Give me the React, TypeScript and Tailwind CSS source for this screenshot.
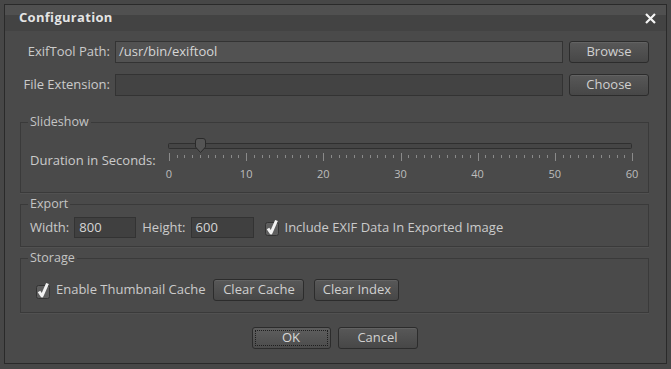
import React from "react";

const Btn = ({ children, className = "" }: { children: React.ReactNode; className?: string }) => (
  <button
    className={`h-[22px] rounded-[3px] border border-[#2c2c2c] bg-linear-to-b from-[#585858] to-[#474747] text-[13px] text-[#d0d0d0] shadow-[inset_0_1px_0_rgba(255,255,255,0.07)] ${className}`}
  >
    {children}
  </button>
);

const Check = () => (
  <svg width="15" height="17" viewBox="0 0 15 17" className="shrink-0">
    <rect x="0.5" y="3.5" width="13" height="13" rx="2" fill="#5e5e5e" stroke="#333" />
    <path d="M3 9.5 L6 14 L11.5 1.5" fill="none" stroke="#f2f2f2" strokeWidth="3" strokeLinejoin="round" />
  </svg>
);

const Group = ({ title, className = "", children }: { title: string; className?: string; children: React.ReactNode }) => (
  <fieldset className={`border border-[#3a3a3a] shadow-[0_1px_0_rgba(255,255,255,0.04)] ${className}`}>
    <legend className="ml-[7px] px-[2px] text-[12.5px] leading-[14px] text-[#c4c4c4]">{title}</legend>
    {children}
  </fieldset>
);

const Slider = () => {
  const ticks = Array.from({ length: 61 }, (_, i) => i);
  const x0 = 10;
  const step = 463 / 60;
  return (
    <div className="w-[483px]">
      <svg width="483" height="26" viewBox="0 0 483 26" className="block">
        <rect x={x0 - 0.5} y="5.5" width="463" height="5" rx="1" fill="#454545" stroke="#2f2f2f" />
        {ticks.map((i) => (
          <line
            key={i}
            x1={Math.round(x0 + i * step) + 0.5}
            x2={Math.round(x0 + i * step) + 0.5}
            y1={i % 10 === 0 ? 15 : 17}
            y2={i % 10 === 0 ? 23 : 20}
            stroke="#8a8a8a"
            strokeWidth="1"
          />
        ))}
        <path
          d="M36.5 3 Q36.5 0.5 39 0.5 L44 0.5 Q46.5 0.5 46.5 3 L46.5 9 L41.5 14.5 L36.5 9 Z"
          fill="#545454"
          stroke="#2a2a2a"
        />
      </svg>
      <div className="mt-[3px] flex justify-between text-[11px] leading-[13px] text-[#bdbdbd]">
        {[0, 10, 20, 30, 40, 50, 60].map((n) => (
          <span key={n} className="w-[20px] text-center">
            {n}
          </span>
        ))}
      </div>
    </div>
  );
};

export default function App() {
  return (
    <div className="h-[369px] w-[671px] overflow-hidden bg-[#474747] pl-[4px] pt-[4px] font-['Open_Sans',sans-serif] text-[#cbcbcb]">
      <div className="flex h-[360px] w-[663px] flex-col border border-[#2a2a2a] bg-[#4a4a4a]">
        <div className="flex h-[26px] items-center justify-between bg-linear-to-b from-[#505050] from-40% to-[#434343] to-40% pl-[14px] pr-[10px]">
          <span className="text-[13px] font-bold tracking-[0.3px] text-[#e4e4e4]">Configuration</span>
          <svg width="11" height="11" viewBox="0 0 11 11">
            <path d="M1 1 L10 10 M10 1 L1 10" stroke="#f4f4f4" strokeWidth="2.2" />
          </svg>
        </div>

        <div className="flex flex-1 flex-col pl-[15px] pr-[17px] pt-[10px] text-[13px]">
          <div className="flex items-center">
            <span className="w-[90px] whitespace-nowrap text-right">ExifTool Path:</span>
            <div className="ml-[5px] flex h-[22px] flex-1 items-center border border-[#333] bg-[#525252] px-[3px] text-[#d6d6d6]">
              /usr/bin/exiftool
            </div>
            <Btn className="ml-[6px] w-[80px]">Browse</Btn>
          </div>
          <div className="mt-[11px] flex items-center">
            <span className="w-[90px] whitespace-nowrap text-right">File Extension:</span>
            <div className="ml-[5px] h-[22px] flex-1 border border-[#333] bg-[#434343]" />
            <Btn className="ml-[6px] w-[80px]">Choose</Btn>
          </div>

          <Group title="Slideshow" className="mt-[19px] h-[78px]">
            <div className="flex items-start pl-[9px] pt-[9px]">
              <span className="mt-[13px] w-[129px] whitespace-nowrap">Duration in Seconds:</span>
              <Slider />
            </div>
          </Group>

          <Group title="Export" className="mt-[4px] h-[50px]">
            <div className="flex items-center pl-[9px] pt-[6px]">
              <span>Width:</span>
              <div className="ml-[5px] flex h-[21px] w-[62px] items-center border border-[#333] bg-[#404040] px-[4px] text-[#d6d6d6]">800</div>
              <span className="ml-[6px]">Height:</span>
              <div className="ml-[5px] flex h-[21px] w-[63px] items-center border border-[#333] bg-[#404040] px-[4px] text-[#d6d6d6]">600</div>
              <span className="ml-[11px]">
                <Check />
              </span>
              <span className="ml-[5px]">Include EXIF Data In Exported Image</span>
            </div>
          </Group>

          <Group title="Storage" className="mt-[4px] h-[62px]">
            <div className="flex items-center pl-[15px] pt-[14px]">
              <Check />
              <span className="ml-[5px]">Enable Thumbnail Cache</span>
              <Btn className="ml-[8px] w-[91px]">Clear Cache</Btn>
              <Btn className="ml-[10px] w-[85px]">Clear Index</Btn>
            </div>
          </Group>

          <div className="mt-[14px] flex justify-center gap-[7px]">
            <button className="h-[22px] w-[79px] rounded-[3px] border border-[#2c2c2c] bg-linear-to-b from-[#5e5e5e] to-[#4c4c4c] p-[2px] text-[13px] text-[#d8d8d8]">
              <span className="flex h-full w-full items-center justify-center border border-dotted border-[#1e1e1e]">OK</span>
            </button>
            <Btn className="w-[80px]">Cancel</Btn>
          </div>
        </div>
      </div>
    </div>
  );
}
